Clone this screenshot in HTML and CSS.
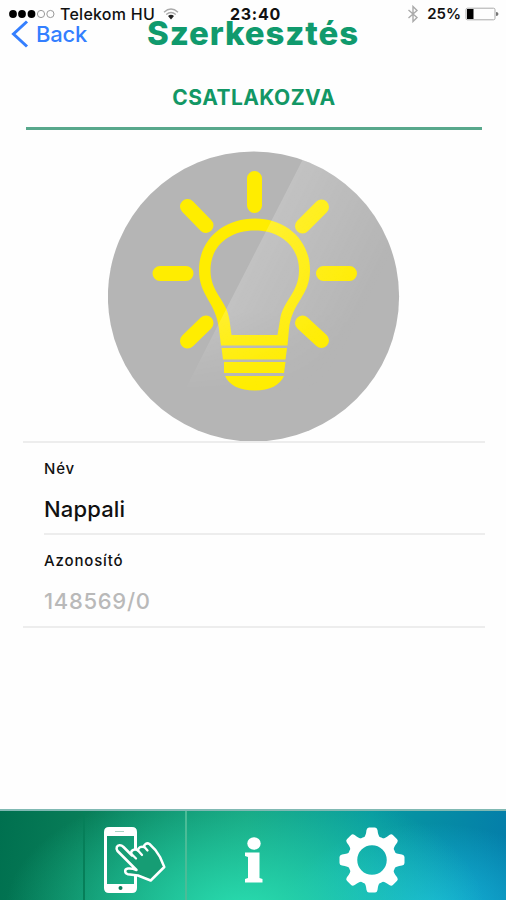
FILE: index.html
```html
<!DOCTYPE html>
<html lang="hu">
<head>
<meta charset="utf-8">
<meta name="viewport" content="width=device-width, initial-scale=1">
<title>Szerkesztés</title>
<link rel="stylesheet" href="styles.css">
</head>
<body>
<div class="screen">
  <div class="status">
    <div class="carrier">
      <svg class="signal" viewBox="0 0 46 10"><circle cx="4" cy="5" r="3.9"/><circle cx="13" cy="5" r="3.9"/><circle cx="22.5" cy="5" r="3.9"/><g fill="none" stroke="#999" stroke-width="1"><circle cx="32" cy="5" r="3.6"/><circle cx="41.4" cy="5" r="3.6"/></g></svg>
      <span class="network">Telekom HU</span>
      <svg class="wifi" viewBox="0 0 16 12"><path d="M1 4.200Q8-2.200 15 4.200M3.200 6.600Q8 2.400 12.800 6.600" fill="none" stroke="#aaa" stroke-width="1.300"/><path d="M5 8Q8 5.400 11 8L8 11.500Z" fill="#222"/></svg>
    </div>
    <span class="clock">23:40</span>
    <div class="power">
      <svg class="bluetooth" viewBox="0 0 12 18"><path d="M1.500 5L10 12.500L6 16.500V1.500L10 5.500L1.500 13" fill="none" stroke="#aaa" stroke-width="1.400"/></svg>
      <span class="percent">25%</span>
      <svg class="battery" viewBox="0 0 34 14"><rect x="1" y="1.200" width="29" height="11.600" rx="1.500" fill="none" stroke="#aaa"/><rect x="2" y="2" width="6.500" height="10"/><path d="M31 5Q33.500 5 33.500 7T31 9Z" fill="#777"/></svg>
    </div>
  </div>
  <header class="nav">
    <a class="back"><svg class="chevron" viewBox="0 0 18 28"><path d="M16 1.500L2.500 14L16 26.500" fill="none" stroke="#347fff" stroke-width="3"/></svg><span>Back</span></a>
    <h1 class="title">Szerkesztés</h1>
  </header>
  <div class="state"><span>CSATLAKOZVA</span></div>
  <svg class="lamp" viewBox="0 0 292 292">
    <defs>
      <linearGradient id="gloss" gradientUnits="userSpaceOnUse" x1="135" y1="100" x2="255" y2="160"><stop offset="0" stop-color="#fff" stop-opacity=".2"/><stop offset="1" stop-color="#fff" stop-opacity="0"/></linearGradient>
      <linearGradient id="fade" x1="0" y1="0" x2="0" y2="1"><stop offset="0" stop-color="#fff"/><stop offset=".55" stop-color="#fff"/><stop offset=".83" stop-color="#000"/></linearGradient>
      <mask id="fading"><rect width="292" height="292" fill="url(#fade)"/></mask>
      <clipPath id="disc"><ellipse cx="145.500" cy="145.500" rx="145.600" ry="145"/></clipPath>
    </defs>
    <ellipse cx="145.500" cy="145.500" rx="145.600" ry="145" fill="#b5b5b5"/>
    <path d="M146.500 27.500V54.500M79.500 55.500L98 74.500M213.500 56L194.500 75M52 122.500H78M215.500 122.500H241.500M79.500 190L98 172M213.500 189.500L194.500 172" fill="none" stroke="#ffed00" stroke-width="15" stroke-linecap="round"/>
    <path fill-rule="evenodd" fill="#ffed00" d="M147 67.500C178 67.500 202 89 202 119C202 145 184 151 181 178L179.500 194.500H113L111 178C108 151 91 145 91 119C91 89 115 67.500 147 67.500ZM147 79.500C120 79.500 102.500 96 102.500 119C102.500 142 119 149 121.500 169L123.500 184H169.500L172 169C175 149 191 142 191 119C191 96 173 79.500 147 79.500Z"/>
    <path fill="#ffed00" d="M113.500 197H179L177.500 208.500H115ZM116 211H177.500L176 222H116ZM117 225H176C172 234 162 239.500 147 239.500C131 239.500 121 234 117 225Z"/>
    <path d="M195 8L64 264H292V0H199Z" fill="url(#gloss)" clip-path="url(#disc)" mask="url(#fading)"/>
  </svg>
  <main class="form">
    <div class="field first"><label class="label">Név</label><div class="value name">Nappali</div></div>
    <div class="field"><label class="label">Azonosító</label><div class="value id">148569/0</div></div>
  </main>
  <nav class="tabs">
    <div class="lead"></div>
    <a class="tab active"><svg class="phone" viewBox="0 0 64 68">
      <path fill="#fff" fill-rule="evenodd" d="M5 0H28Q33 0 33 5V61Q33 66 28 66H5Q0 66 0 61V5Q0 0 5 0ZM3 9V57H30V9Z"/>
      <path d="M11 4.500H20" stroke="#a8d4c4"/><circle cx="16.500" cy="61" r="2" fill="#087b57"/>
      <path d="M13.500 24C11.500 21 13 18.500 15.500 18.200Q17.500 18 19.500 20L28 28.500L27 26.500C27 23 31 21.500 34 23.500C34 20.500 37 19 40 20C40 17 43 15.500 45.500 17Q52 22.500 56 30L60.300 40L46.700 53.500L34 48.500L24 47.300C20.500 46.500 20 42 24 41.500Q28 41 32.500 43Z" fill="#169d74" stroke="#fff" stroke-width="2.500" stroke-linejoin="round"/>
      <path d="M27.500 27L32 31.500M34 23.500L38 28M40 19.500L43.500 23.500" stroke="#fff" stroke-width="2.300" stroke-linecap="round"/>
    </svg></a>
    <a class="tab info"><svg class="infoicon" viewBox="0 0 20 48"><ellipse cx="10" cy="6.500" rx="6.700" ry="6.200" fill="#fff"/><path d="M1 15.500H15.500V41L18.500 42V45.500H1V42L4 41V20L1 19Z" fill="#fff"/></svg></a>
    <a class="tab gear"><svg class="cog" viewBox="-33 -33 66 66">
      <defs><path id="tooth" d="M-9-21Q-6-24-5.500-30Q-5-32.500-3-32.500H3Q5-32.500 5.500-30Q6-24 9-21Z"/></defs>
      <g fill="#fff"><use href="#tooth"/><use href="#tooth" transform="rotate(45)"/><use href="#tooth" transform="rotate(90)"/><use href="#tooth" transform="rotate(135)"/><use href="#tooth" transform="rotate(180)"/><use href="#tooth" transform="rotate(225)"/><use href="#tooth" transform="rotate(270)"/><use href="#tooth" transform="rotate(315)"/></g>
      <circle r="19.500" fill="none" stroke="#fff" stroke-width="9.500"/>
    </svg></a>
  </nav>
</div>
</body>
</html>
```
FILE: styles.css
```css
* { box-sizing: border-box; }
body { margin: 0; background: #fefefe; font-family: Inter, "Liberation Sans", sans-serif; color: #111; }
.screen { width: 506px; height: 900px; display: flex; flex-direction: column; overflow: hidden; }
svg { display: block; flex: none; }
.status { height: 28px; display: grid; grid-template-columns: 1fr auto 1fr; align-items: center; padding: 0 7px 0 9px; font-size: 16px; line-height: 28px; position: relative; z-index: 1; }
.carrier, .power { display: flex; align-items: center; }
.power { justify-content: flex-end; }
.signal { width: 46px; height: 10px; }
.network { margin-left: 5px; font-weight: 500; letter-spacing: .25px; }
.wifi { width: 16px; height: 12px; margin-left: 8px; }
.clock { font-weight: 700; letter-spacing: .7px; margin-left: 3px; }
.bluetooth { width: 12px; height: 18px; margin-right: 8px; }
.percent { font-size: 15px; font-weight: 600; margin-right: 4px; }
.battery { width: 34px; height: 14px; }
.nav { height: 40px; margin-top: -14px; display: grid; grid-template-columns: 1fr auto 1fr; align-items: center; padding: 0 11px; }
.back { display: flex; align-items: center; color: #347fff; font-size: 22px; font-weight: 500; letter-spacing: -.2px; margin-top: -1px; }
.chevron { width: 18px; height: 28px; margin-right: 7px; }
.title { margin: -2px 0 0; color: #109a6d; font-size: 33px; font-weight: 800; line-height: 40px; letter-spacing: .9px; }
.state { margin: 23px 24px 0 26px; height: 53px; border-bottom: 3px solid #58a88c; text-align: center; color: #129765; font-size: 21px; font-weight: 700; line-height: 41px; letter-spacing: .45px; }
.lamp { width: 292px; height: 292px; margin: 21px 0 0 108px; }
.form { margin: -2px 21px 0 23px; border-top: 2px solid #ededed; border-bottom: 2px solid #ededed; height: 187px; }
.field { margin-left: 21px; height: 92px; }
.first { border-bottom: 2px solid #ededed; }
.label { display: block; padding-top: 15px; font-size: 15px; line-height: 22px; font-weight: 500; letter-spacing: .85px; }
.value { padding-top: 15px; font-size: 22px; line-height: 28px; font-weight: 500; letter-spacing: .15px; }
.id { color: #b9b9b9; letter-spacing: .7px; }
.tabs { height: 91px; margin-top: auto; border-top: 2px solid #80b9b3; display: grid; grid-template-columns: 83px 104px 132px 1fr; background: radial-gradient(ellipse 240px 130px at 245px 112%, #29dcaf, rgba(41,220,175,0)), radial-gradient(ellipse 150px 90px at 430px 115%, #17b5dc, rgba(23,181,220,0)), linear-gradient(97deg, #00704f 0%, #087d58 16%, #149c7a 48%, #0799a0 72%, #047daa 100%); }
.tab { display: flex; align-items: center; }
.active { border-left: 2px solid #067f59; border-right: 2px solid #4bbc97; padding: 10px 0 0 19px; }
.phone { width: 64px; height: 68px; }
.info { padding: 10px 0 0 57px; }
.infoicon { width: 20px; height: 48px; }
.gear { padding: 9px 0 0 20px; }
.cog { width: 66px; height: 66px; }
```
